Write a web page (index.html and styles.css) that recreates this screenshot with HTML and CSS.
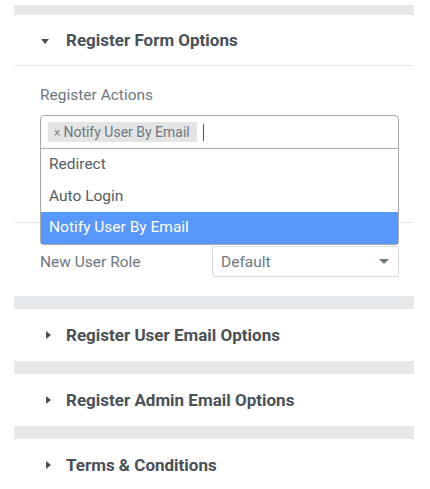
FILE: index.html
```html
<!DOCTYPE html>
<html>
<head lang="en">
    <meta charset="UTF-8">
    <title>Register Options</title>
    <link rel="stylesheet" href="styles.css">
</head>
<body>
<div class="panel">
    <div class="band band-top"></div>
    <div class="section open">
        <div class="section-head">
            <span class="caret caret-down"></span>
            <span class="section-title">Register Form Options</span>
        </div>
        <div class="section-body">
            <div class="control control-actions">
                <div class="control-label">Register Actions</div>
                <div class="multi-select">
                    <div class="tags">
                        <span class="tag"><span class="tag-x">×</span>Notify User By Email</span>
                        <span class="cursor"></span>
                    </div>
                    <ul class="dropdown">
                        <li>Redirect</li>
                        <li>Auto Login</li>
                        <li class="active">Notify User By Email</li>
                    </ul>
                </div>
            </div>
            <div class="control control-inline">
                <div class="control-label">New User Role</div>
                <div class="select">
                    <span>Default</span>
                    <span class="select-arrow"></span>
                </div>
            </div>
        </div>
    </div>
    <div class="band"></div>
    <div class="section">
        <div class="section-head">
            <span class="caret caret-right"></span>
            <span class="section-title">Register User Email Options</span>
        </div>
    </div>
    <div class="band"></div>
    <div class="section">
        <div class="section-head">
            <span class="caret caret-right"></span>
            <span class="section-title">Register Admin Email Options</span>
        </div>
    </div>
    <div class="band"></div>
    <div class="section">
        <div class="section-head">
            <span class="caret caret-right"></span>
            <span class="section-title">Terms &amp; Conditions</span>
        </div>
    </div>
</div>
</body>
</html>
```

FILE: styles.css
```css
* {
    margin: 0;
    padding: 0;
    box-sizing: border-box;
    list-style: none;
}

body {
    background: #fff;
    font-family: Roboto, "Liberation Sans", Arial, sans-serif;
    padding-top: 5px;
}

.panel {
    width: 400px;
    margin-left: 14px;
}

.band {
    height: 13px;
    background: #e6e9ec;
}

.band-top {
    height: 10px;
}

.section-head {
    height: 52px;
    display: flex;
    align-items: center;
    padding-left: 27px;
    color: #495157;
}

.open .section-head {
    height: 51px;
    border-bottom: 1px solid #e6e9ec;
}

.section-title {
    font-size: 17px;
    font-weight: bold;
}

.caret {
    width: 0;
    height: 0;
    margin-right: 17px;
}

.caret-down {
    border-left: 4px solid transparent;
    border-right: 4px solid transparent;
    border-top: 5px solid #495157;
    margin-top: 2px;
}

.caret-right {
    border-top: 4px solid transparent;
    border-bottom: 4px solid transparent;
    border-left: 5px solid #495157;
    margin-left: 5px;
    margin-right: 15px;
}

.section-body {
    padding: 0 15px 19px 26px;
}

.control-label {
    color: #6d7882;
    font-size: 15.5px;
}

.control-actions {
    padding-top: 20px;
    height: 157px;
    border-bottom: 1px solid #e6e9ec;
    margin: 0 -15px 0 -26px;
    padding-left: 26px;
    padding-right: 15px;
}

.control-actions .control-label {
    margin-bottom: 11px;
}

.multi-select {
    position: relative;
}

.tags {
    height: 34px;
    border: 1px solid #aaa;
    border-radius: 4px 4px 0 0;
    display: flex;
    align-items: center;
    padding-left: 7px;
}

.tag {
    background: #e4e4e4;
    color: #6d7882;
    font-size: 14px;
    height: 20px;
    line-height: 20px;
    padding: 0 7px 0 6px;
}

.tag-x {
    color: #888;
    font-size: 12px;
    margin-right: 3px;
}

.cursor {
    width: 1px;
    height: 17px;
    background: #555;
    margin-left: 6px;
}

.dropdown {
    position: absolute;
    left: 0;
    right: 0;
    top: 34px;
    background: #fff;
    border: 1px solid #aaa;
    border-top: none;
    border-radius: 0 0 4px 4px;
    z-index: 2;
}

.dropdown li {
    height: 31.5px;
    line-height: 31.5px;
    padding-left: 8px;
    font-size: 15.5px;
    color: #555d63;
}

.dropdown li.active {
    background: #5897fb;
    color: #fff;
}

.control-inline {
    display: flex;
    align-items: center;
    margin-top: 23px;
}

.control-inline .control-label {
    width: 172px;
}

.select {
    flex: 1;
    height: 31px;
    border: 1px solid #d5dadf;
    border-radius: 3px;
    display: flex;
    align-items: center;
    justify-content: space-between;
    padding: 0 9px 0 8px;
    color: #6d7882;
    font-size: 15.5px;
}

.select-arrow {
    width: 0;
    height: 0;
    border-left: 5px solid transparent;
    border-right: 5px solid transparent;
    border-top: 5px solid #6d7882;
}
```
